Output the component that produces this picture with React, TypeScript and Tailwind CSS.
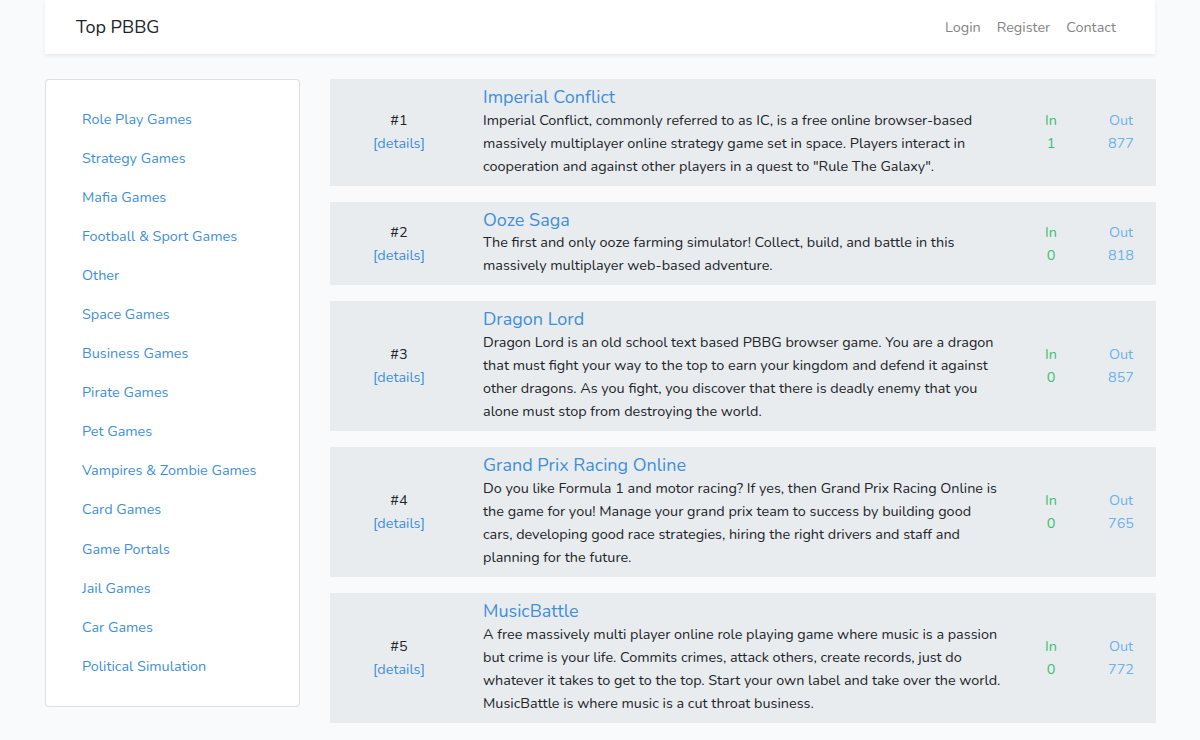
import React from "react";

const categories = [
  "Role Play Games",
  "Strategy Games",
  "Mafia Games",
  "Football & Sport Games",
  "Other",
  "Space Games",
  "Business Games",
  "Pirate Games",
  "Pet Games",
  "Vampires & Zombie Games",
  "Card Games",
  "Game Portals",
  "Jail Games",
  "Car Games",
  "Political Simulation",
];

const games = [
  {
    rank: 1,
    title: "Imperial Conflict",
    desc: 'Imperial Conflict, commonly referred to as IC, is a free online browser-based massively multiplayer online strategy game set in space. Players interact in cooperation and against other players in a quest to "Rule The Galaxy".',
    inn: 1,
    out: 877,
  },
  {
    rank: 2,
    title: "Ooze Saga",
    desc: "The first and only ooze farming simulator! Collect, build, and battle in this massively multiplayer web-based adventure.",
    inn: 0,
    out: 818,
  },
  {
    rank: 3,
    title: "Dragon Lord",
    desc: "Dragon Lord is an old school text based PBBG browser game. You are a dragon that must fight your way to the top to earn your kingdom and defend it against other dragons. As you fight, you discover that there is deadly enemy that you alone must stop from destroying the world.",
    inn: 0,
    out: 857,
  },
  {
    rank: 4,
    title: "Grand Prix Racing Online",
    desc: "Do you like Formula 1 and motor racing? If yes, then Grand Prix Racing Online is the game for you! Manage your grand prix team to success by building good cars, developing good race strategies, hiring the right drivers and staff and planning for the future.",
    inn: 0,
    out: 765,
  },
  {
    rank: 5,
    title: "MusicBattle",
    desc: "A free massively multi player online role playing game where music is a passion but crime is your life. Commits crimes, attack others, create records, just do whatever it takes to get to the top. Start your own label and take over the world. MusicBattle is where music is a cut throat business.",
    inn: 0,
    out: 772,
  },
];

export default function App() {
  return (
    <div
      className="min-h-[740px] bg-[#f8fafc] text-[#212529] text-[14.4px] leading-[23.04px]"
      style={{ fontFamily: "Nunito, Lato, 'Noto Sans', sans-serif" }}
    >
      <div className="w-[1110px] mx-auto">
        <nav className="h-[54px] pt-[2px] bg-white shadow-[0_2px_4px_rgba(0,0,0,0.075)] flex items-center justify-between pl-[31px] pr-[31px]">
          <span className="text-[18px] text-[#212529]">Top PBBG</span>
          <div className="flex text-[#858585]">
            <span className="px-2">Login</span>
            <span className="px-2">Register</span>
            <span className="px-2">Contact</span>
          </div>
        </nav>

        <div className="flex gap-[30px] mt-[25px]">
          <aside className="w-[255px] shrink-0 self-start bg-white border border-[rgba(0,0,0,0.125)] rounded p-5">
            <ul>
              {categories.map((c) => (
                <li key={c} className="px-4 py-2 text-[#3f8fd8]">
                  {c}
                </li>
              ))}
            </ul>
          </aside>

          <main className="flex-1 flex flex-col gap-4">
            {games.map((g) => (
              <div key={g.rank} className="bg-[#e9ecef] flex items-center py-2">
                <div className="w-[138px] shrink-0 text-center">
                  <div>#{g.rank}</div>
                  <div className="text-[#3f8fd8]">[details]</div>
                </div>
                <div className="w-[519px] shrink-0 ml-[15px]">
                  <div className="text-[18px] leading-[21.6px] text-[#3f8fd8]">{g.title}</div>
                  <div>{g.desc}</div>
                </div>
                <div className="w-[70px] shrink-0 ml-[14px] text-center text-[#38c172]">
                  <div>In</div>
                  <div>{g.inn}</div>
                </div>
                <div className="w-[70px] shrink-0 text-center text-[#6cb2eb]">
                  <div>Out</div>
                  <div>{g.out}</div>
                </div>
              </div>
            ))}
          </main>
        </div>
      </div>
    </div>
  );
}
